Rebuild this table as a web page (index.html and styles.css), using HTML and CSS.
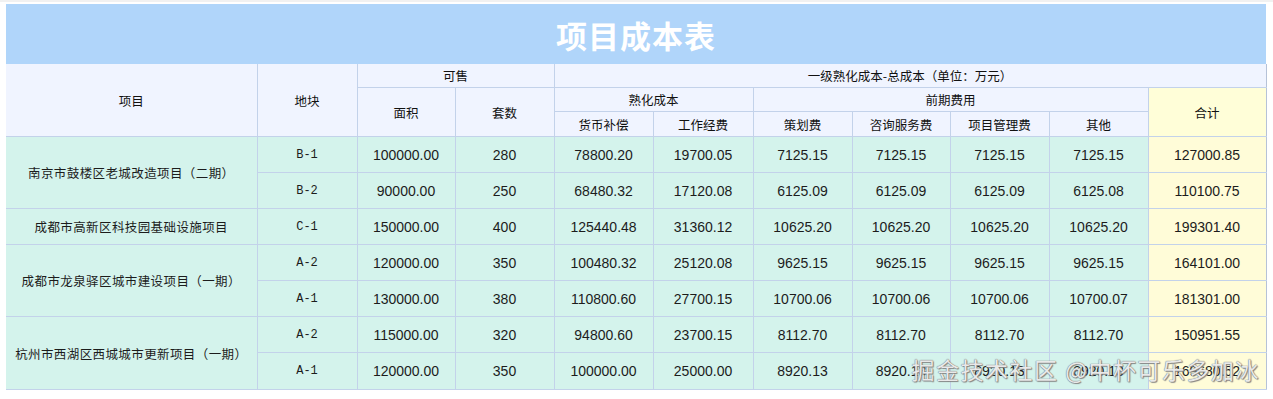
FILE: index.html
```html
<!DOCTYPE html>
<html lang="zh-CN">
<head>
    <meta charset="UTF-8">
    <meta name="viewport" content="width=device-width, initial-scale=1.0">
    <title>项目成本表</title>
    <link rel="stylesheet" href="styles.css">
</head>
<body>
    <div class="sheet">
        <div class="sheet-title">项目成本表</div>
        <table class="cost-table">
            <colgroup>
                <col style="width:251px">
                <col style="width:100px">
                <col style="width:98px">
                <col style="width:99px">
                <col style="width:99px">
                <col style="width:100px">
                <col style="width:99px">
                <col style="width:98px">
                <col style="width:99px">
                <col style="width:99px">
                <col style="width:118px">
            </colgroup>
            <thead>
                <tr class="head-row-1">
                    <th rowspan="3">项目</th>
                    <th rowspan="3">地块</th>
                    <th colspan="2">可售</th>
                    <th colspan="7">一级熟化成本-总成本（单位：万元）</th>
                </tr>
                <tr class="head-row-2">
                    <th rowspan="2">面积</th>
                    <th rowspan="2">套数</th>
                    <th colspan="2">熟化成本</th>
                    <th colspan="4">前期费用</th>
                    <th rowspan="2" class="total">合计</th>
                </tr>
                <tr class="head-row-3">
                    <th>货币补偿</th>
                    <th>工作经费</th>
                    <th>策划费</th>
                    <th>咨询服务费</th>
                    <th>项目管理费</th>
                    <th>其他</th>
                </tr>
            </thead>
            <tbody>
                <tr>
                    <td rowspan="2" class="name">南京市鼓楼区老城改造项目（二期）</td>
                    <td class="lot">B-1</td>
                    <td>100000.00</td><td>280</td><td>78800.20</td><td>19700.05</td>
                    <td>7125.15</td><td>7125.15</td><td>7125.15</td><td>7125.15</td>
                    <td class="total">127000.85</td>
                </tr>
                <tr>
                    <td class="lot">B-2</td>
                    <td>90000.00</td><td>250</td><td>68480.32</td><td>17120.08</td>
                    <td>6125.09</td><td>6125.09</td><td>6125.09</td><td>6125.08</td>
                    <td class="total">110100.75</td>
                </tr>
                <tr>
                    <td class="name">成都市高新区科技园基础设施项目</td>
                    <td class="lot">C-1</td>
                    <td>150000.00</td><td>400</td><td>125440.48</td><td>31360.12</td>
                    <td>10625.20</td><td>10625.20</td><td>10625.20</td><td>10625.20</td>
                    <td class="total">199301.40</td>
                </tr>
                <tr>
                    <td rowspan="2" class="name">成都市龙泉驿区城市建设项目（一期）</td>
                    <td class="lot">A-2</td>
                    <td>120000.00</td><td>350</td><td>100480.32</td><td>25120.08</td>
                    <td>9625.15</td><td>9625.15</td><td>9625.15</td><td>9625.15</td>
                    <td class="total">164101.00</td>
                </tr>
                <tr>
                    <td class="lot">A-1</td>
                    <td>130000.00</td><td>380</td><td>110800.60</td><td>27700.15</td>
                    <td>10700.06</td><td>10700.06</td><td>10700.06</td><td>10700.07</td>
                    <td class="total">181301.00</td>
                </tr>
                <tr>
                    <td rowspan="2" class="name">杭州市西湖区西城城市更新项目（一期）</td>
                    <td class="lot">A-2</td>
                    <td>115000.00</td><td>320</td><td>94800.60</td><td>23700.15</td>
                    <td>8112.70</td><td>8112.70</td><td>8112.70</td><td>8112.70</td>
                    <td class="total">150951.55</td>
                </tr>
                <tr>
                    <td class="lot">A-1</td>
                    <td>120000.00</td><td>350</td><td>100000.00</td><td>25000.00</td>
                    <td>8920.13</td><td>8920.13</td><td>8920.13</td><td>8920.13</td>
                    <td class="total">169680.52</td>
                </tr>
            </tbody>
        </table>
        <div class="watermark">掘金技术社区 @中杯可乐多加冰</div>
    </div>
</body>
</html>
```

FILE: styles.css
```css
/* page */
body {
    margin: 0;
    padding: 2px 7px 0 6px;
    background: #ffffff;
    border-top: 2px solid #f1f1f1;
    font-family: "Liberation Sans", "Noto Sans CJK SC", sans-serif;
    color: #1a1a1a;
}

.sheet {
    position: relative;
    width: 1260px;
}

.sheet-title {
    height: 60px;
    background: #b0d5fa;
    color: #ffffff;
    font-family: "Noto Sans CJK SC", sans-serif;
    font-weight: 700;
    font-size: 31px;
    letter-spacing: 1px;
    display: flex;
    align-items: center;
    justify-content: center;
}

/* table */
.cost-table {
    width: 1260px;
    border-collapse: collapse;
    table-layout: fixed;
}

.cost-table th,
.cost-table td {
    border: 1px solid #c3d2ea;
    padding: 0;
    text-align: center;
    vertical-align: middle;
}

.cost-table th {
    background: #f0f4ff;
    font-family: "Noto Sans CJK SC", sans-serif;
    font-weight: 400;
    font-size: 12.5px;
    color: #111;
}

.cost-table thead tr:first-child th {
    border-top: none;
}

.cost-table tr > :first-child {
    border-left: none;
}

.cost-table tr > :last-child {
    border-right-color: #b6c2d8;
}

.head-row-1 th,
.head-row-2 th {
    height: 23px;
}

.head-row-3 th {
    height: 24px;
}

.cost-table th.total {
    background: #fffed8;
}

.cost-table td {
    height: 35px;
    background: #d4f3ec;
    font-size: 14px;
    color: #1c1c1c;
}

.cost-table tbody tr:last-child td {
    height: 36px;
}

.cost-table td.name {
    font-family: "Noto Sans CJK SC", sans-serif;
    font-size: 12.5px;
    letter-spacing: 0.4px;
}

.cost-table td.lot {
    font-family: "Liberation Mono", "Noto Sans CJK SC", monospace;
    font-size: 12px;
}

.cost-table td.total {
    background: #fffcd8;
}

/* watermark overlay */
.watermark {
    position: absolute;
    right: 6px;
    bottom: 4px;
    font-family: "Noto Sans CJK SC", sans-serif;
    font-size: 23px;
    color: rgba(255, 255, 255, 0.85);
    letter-spacing: 1.5px;
    text-shadow: 0 0 1px #777, 0 0 1px #777, 1px 1px 1px #888;
}
```
